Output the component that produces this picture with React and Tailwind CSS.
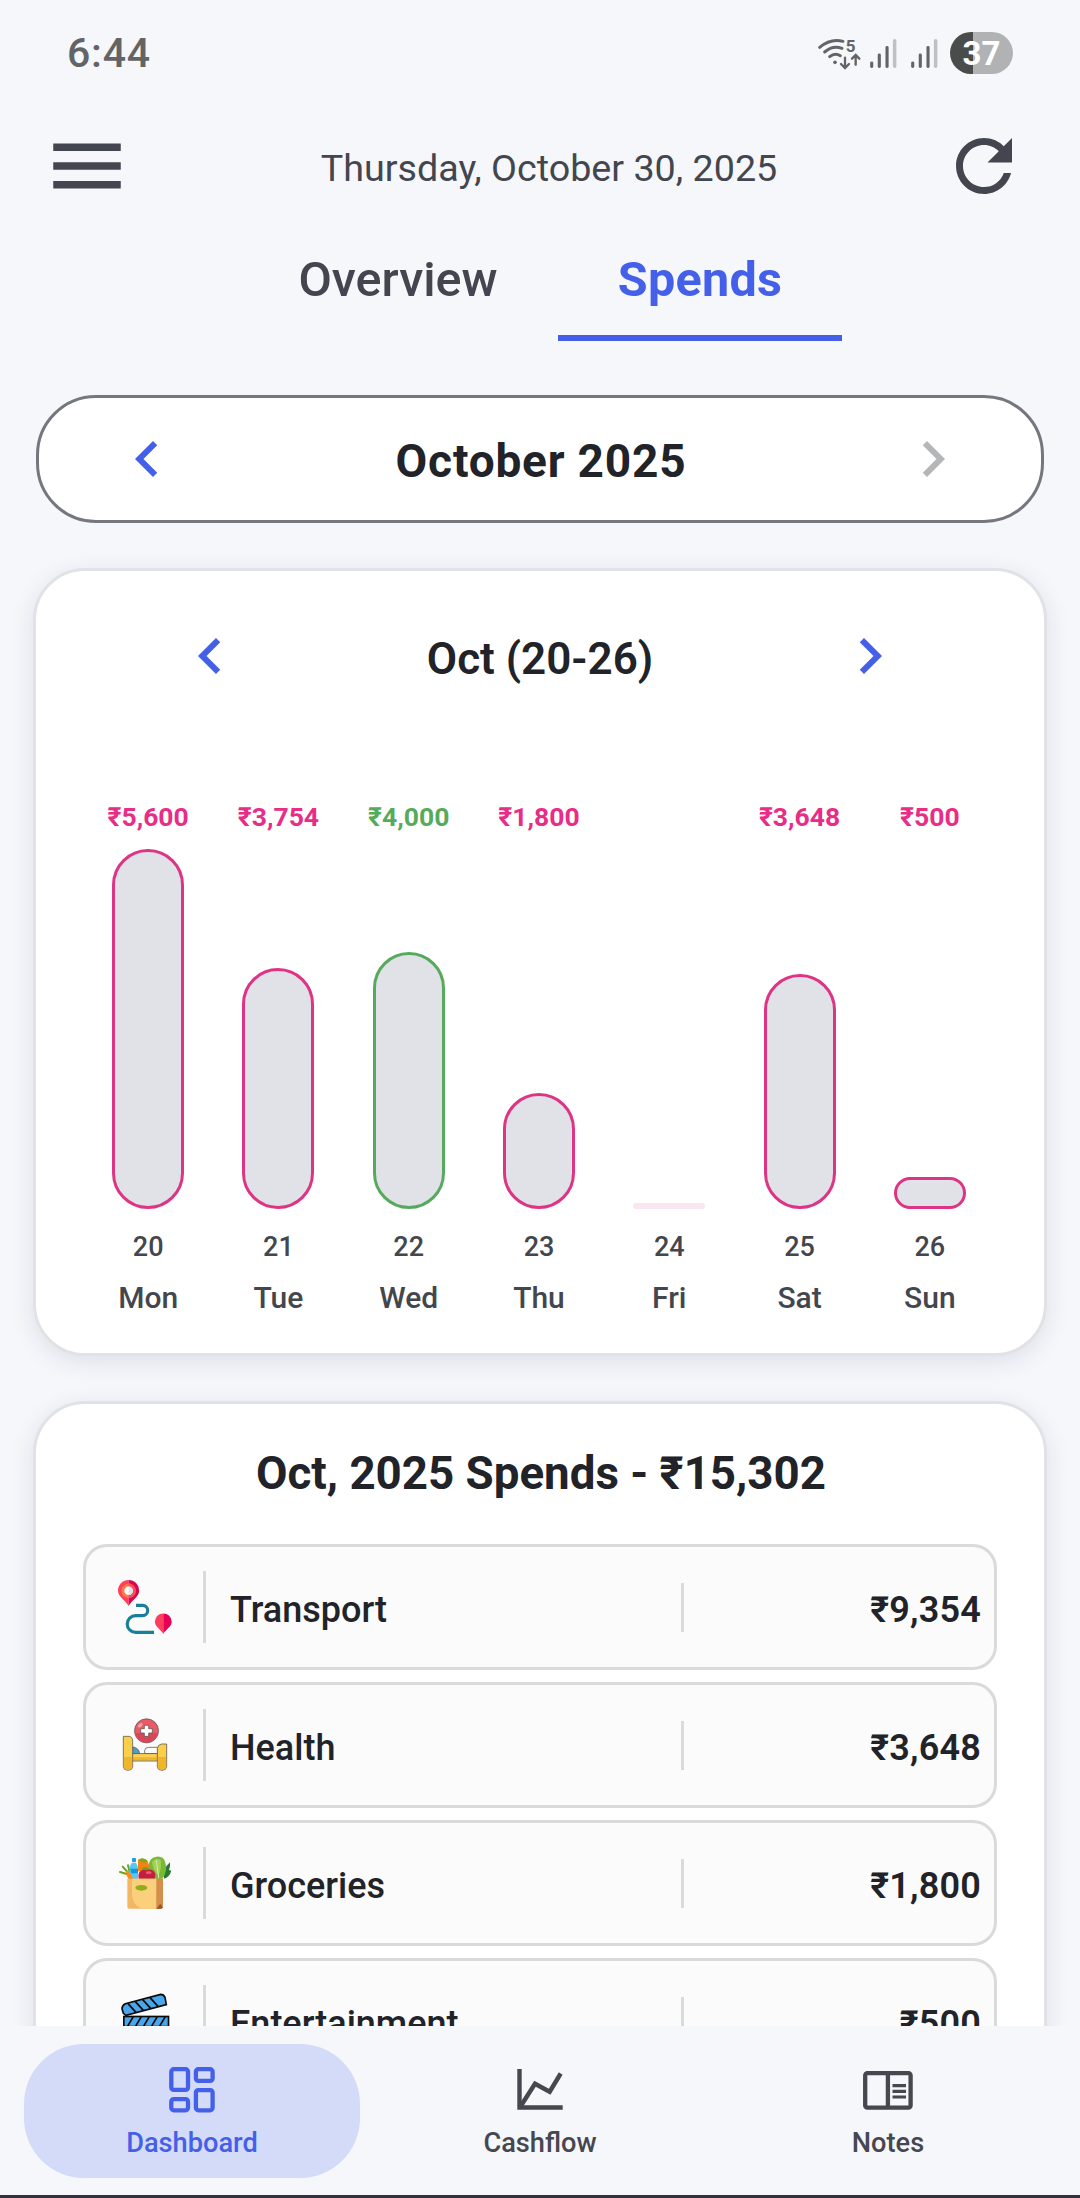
import { MdMenu, MdRefresh, MdChevronLeft, MdChevronRight } from "react-icons/md";

const week = [
  { day: "Mon", date: 20, label: "₹5,600", height: 360, tone: "pink" },
  { day: "Tue", date: 21, label: "₹3,754", height: 241, tone: "pink" },
  { day: "Wed", date: 22, label: "₹4,000", height: 257, tone: "green" },
  { day: "Thu", date: 23, label: "₹1,800", height: 116, tone: "pink" },
  { day: "Fri", date: 24, label: "", height: 0, tone: "none" },
  { day: "Sat", date: 25, label: "₹3,648", height: 235, tone: "pink" },
  { day: "Sun", date: 26, label: "₹500", height: 32, tone: "pink" },
];

const tones = {
  pink: { text: "text-[#e92c86]", bar: "border-[#dd3486]" },
  green: { text: "text-[#56ab5b]", bar: "border-[#56a95d]" },
  none: { text: "", bar: "" },
};

const categories = [
  { name: "Transport", amount: "₹9,354", Icon: TransportIcon },
  { name: "Health", amount: "₹3,648", Icon: HealthIcon },
  { name: "Groceries", amount: "₹1,800", Icon: GroceriesIcon },
  { name: "Entertainment", amount: "₹500", Icon: ClapperIcon },
];

function WifiIcon() {
  return (
    <svg viewBox="48 45 138 108" className="h-9 w-[46px]" fill="none" stroke="#636465" strokeWidth="9" strokeLinecap="round">
      <path d="M59 82 Q92 54 129 64" />
      <path d="M74 96 Q98 75 126 85" />
      <path d="M89 110 Q105 97 121 107" />
      <circle cx="105" cy="127" r="5.5" fill="#636465" stroke="none" />
      <text x="137" y="95" fontSize="51" fontWeight="700" fontFamily="Roboto, sans-serif" fill="#636465" stroke="none">5</text>
      <path d="M135 113 V143 M123 132 L135 144 L147 132" strokeWidth="7" />
      <path d="M167 134 V106 M156 116 L167 105 L178 116" strokeWidth="7" />
    </svg>
  );
}

function SignalIcon() {
  return (
    <svg viewBox="208 50 84 94" className="h-[31px] w-7">
      <rect x="211" y="121" width="9.5" height="20" rx="4.5" fill="#636465" />
      <rect x="234" y="97" width="9.5" height="44" rx="4.5" fill="#636465" />
      <rect x="257.5" y="74" width="9.5" height="67" rx="4.5" fill="#636465" />
      <rect x="280" y="53" width="10.5" height="88" rx="5" fill="#bfc0c3" />
    </svg>
  );
}

function TransportIcon() {
  return (
    <svg viewBox="0 0 54 54" className="size-[54px]">
      <path d="M18 25.4 H24.6 a5 5 0 0 1 0 10.2 H17.6 a8.3 8.3 0 0 0 0 16.8 H36" fill="none" stroke="#197e99" strokeWidth="3.1" />
      <path d="M10.6 0 A10.6 10.6 0 0 0 0 10.6 C0 17 7 20 10.6 26 Z" fill="#ff4155" />
      <path d="M10.6 0 A10.6 10.6 0 0 1 21.2 10.6 C21.2 17 14.2 20 10.6 26 Z" fill="#d3084f" />
      <circle cx="10.6" cy="10.8" r="7.2" fill="#ff7a4a" />
      <path d="M10.6 3.6 a7.2 7.2 0 0 1 0 14.4 Z" fill="#fb4a59" />
      <circle cx="10.6" cy="10.8" r="4.3" fill="#fff" />
      <path d="M10.6 6.5 a4.3 4.3 0 0 1 0 8.6 Z" fill="#dfe3ee" />
      <path d="M45.3 33.4 A8.4 8.4 0 0 0 36.9 41.8 C36.9 47 43 49.5 45.3 54 Z" fill="#ff3d5c" />
      <path d="M45.3 33.4 A8.4 8.4 0 0 1 53.7 41.8 C53.7 47 47.6 49.5 45.3 54 Z" fill="#e60058" />
    </svg>
  );
}

function HealthIcon() {
  return (
    <svg viewBox="174 174 162 162" className="size-[54px]" stroke="#5d5a55" strokeWidth="2.4">
      <path d="M218 261 C230 262 238 270 239 281 H218 Z" fill="#4a9fd0" />
      <path d="M254 281 V272 Q255 262 266 262 H293 V281 Z" fill="#fbfbfb" />
      <rect x="216" y="281" width="78" height="22" fill="#fbd050" />
      <rect x="217" y="292" width="76" height="8" fill="#efb52b" stroke="none" />
      <path d="M190 229 H207 Q218 230 218 244 V322 Q216 331 204 331 Q191 331 190 320 Z" fill="#fbcf4c" />
      <path d="M191.500 291 H216.500 V321 Q214 330 204 330 Q192 330 191.500 319 Z" fill="#efb52b" stroke="none" />
      <path d="M320 252 H304 Q293 254 292 266 V322 Q294 331 306 331 Q319 331 320 320 Z" fill="#fbcf4c" />
      <path d="M318.500 291 H293.500 V321 Q296 330 306 330 Q318 330 318.500 319 Z" fill="#efb52b" stroke="none" />
      <circle cx="259.500" cy="212.500" r="36" fill="#ec5a68" />
      <path d="M225 219 H294 A35 35 0 0 1 225 219 Z" fill="#d9465a" stroke="none" />
      <ellipse cx="241" cy="196" rx="8" ry="5" transform="rotate(-40 241 196)" fill="#f9a3aa" stroke="none" />
      <path d="M253 196 H266 V206 H277 V219 H266 V229 H253 V219 H242 V206 H253 Z" fill="#fff" />
    </svg>
  );
}

function GroceriesIcon() {
  return (
    <svg viewBox="174 588 162 162" className="size-[54px]">
      <path d="M208 644 L180 636 M208 642 L188 620 M210 640 L204 616" stroke="#6ba51d" strokeWidth="6" strokeLinecap="round" fill="none" />
      <path d="M198 634 Q212 630 222 642 L232 658 H206 Q197 646 198 634 Z" fill="#fb8c1c" />
      <rect x="216" y="594" width="12" height="12" rx="2" fill="#1e9ee6" />
      <path d="M216 608 H228 Q235 618 234 628 V658 H220 L209 636 V624 Q210 614 216 608 Z" fill="#55c8f5" />
      <path d="M211 626 H234 V640 H214 Z" fill="#1496e0" />
      <path d="M234 600 Q246 592 262 602 L274 634 H234 Z" fill="#f78212" />
      <path d="M234 600 Q250 588 264 604 Q250 612 240 602 Z" fill="#7cab1f" />
      <path d="M312 656 Q306 628 330 607 Q332 620 327 630 L334 632 Q328 652 312 656 Z" fill="#2b7a33" />
      <path d="M266 616 Q268 592 290 590 Q312 588 316 608 Q324 634 306 658 H284 Q268 640 266 616 Z" fill="#79ba35" />
      <path d="M276 606 Q288 592 302 600 Q306 620 296 648 Q280 632 276 606 Z" fill="#a3d15a" />
      <path d="M289 600 L296 654" stroke="#d8ecae" strokeWidth="3" />
      <path d="M236 658 Q230 630 256 628 Q284 626 286 644 L284 658 Z" fill="#c41f3f" />
      <path d="M244 628 Q256 616 270 628 Q258 634 244 628 Z" fill="#6e9a1f" />
      <ellipse cx="266" cy="638" rx="9" ry="4" fill="#ef5c72" />
      <path d="M202 656 H309 V740 Q309 746 303 746 H208 Q202 746 202 740 Z" fill="#f3b763" />
      <path d="M216 656 H289 V746 H250 Q216 738 216 698 Z" fill="#fad07c" />
      <path d="M289 656 H309 V740 Q309 746 303 746 H289 Z" fill="#d48f4c" />
      <path d="M289 746 L301 731 L308 742 Q306 746 302 746 Z" fill="#94552b" />
      <ellipse cx="244" cy="683.500" rx="18" ry="8.500" fill="#93ac17" />
    </svg>
  );
}

function ClapperIcon() {
  return (
    <svg viewBox="174 1002 162 162" className="size-[54px] overflow-visible" stroke="#0a0a0a" strokeWidth="5">
      <path d="M198 1066 L190 1060 L186 1046 Q186 1036 196 1031 L302 1003 Q311 1003 315 1012 L319 1034 Z" fill="#4aa5ea" />
      <path d="M204 1031 L228 1057 M226 1025 L250 1051 M248 1019 L272 1045 M270 1013 L294 1039" fill="none" />
      <rect x="191.500" y="1069.500" width="134" height="90" fill="#4aa5ea" />
      <path d="M191 1100 H326 M202 1100 L220 1070 M226 1100 L244 1070 M250 1100 L268 1070 M274 1100 L292 1070 M298 1100 L316 1070" fill="none" />
    </svg>
  );
}

function DashboardIcon() {
  return (
    <svg viewBox="0 0 60 60" className="size-[60px]" fill="none" stroke="currentColor" strokeWidth="4.300">
      <rect x="9.300" y="9.200" width="16.700" height="20.700" rx="2.500" />
      <rect x="33.900" y="9.200" width="16.700" height="11.700" rx="2.500" />
      <rect x="9.300" y="39.100" width="16.700" height="11.200" rx="2.500" />
      <rect x="33.900" y="30.100" width="16.700" height="20.200" rx="2.500" />
    </svg>
  );
}

function CashflowIcon() {
  return (
    <svg viewBox="0 0 60 60" className="size-[60px]" fill="none" stroke="currentColor" strokeWidth="4.400">
      <path d="M9.500 9 V47.500 H52.700" />
      <path d="M10.500 46.500 L25 23.700 L39.700 31.700 L50.700 13.500" />
    </svg>
  );
}

function NotesIcon() {
  return (
    <svg viewBox="0 0 60 60" className="size-[60px]" fill="none" stroke="currentColor" strokeWidth="4.300">
      <rect x="7.200" y="13.200" width="45.400" height="34.500" rx="2.200" />
      <path d="M29.900 13 V48" />
      <path d="M34.500 25.700 H48 M34.500 31.300 H48 M34.500 37 H48" strokeWidth="3.200" />
    </svg>
  );
}

function DayColumn({ day, date, label, height, tone }) {
  return (
    <div className="flex flex-1 flex-col items-center">
      <div className={`h-8 text-[26.5px] leading-[33px] font-bold ${tones[tone].text}`}>{label}</div>
      <div className="mt-[17px] flex h-[360px] items-end">
        {height > 0 ? (
          <div className={`w-[72px] rounded-[36px] border-[3px] bg-[#e1e2e8] ${tones[tone].bar}`} style={{ height }} />
        ) : (
          <div className="h-1.5 w-[72px] rounded-full bg-[#f9e6f1]" />
        )}
      </div>
      <div className="mt-5 h-9 text-[27px] leading-9 font-medium text-[#44464e]">{date}</div>
      <div className="mt-[13px] h-10 text-[30px] leading-10 font-medium text-[#44464e]">{day}</div>
    </div>
  );
}

function CategoryRow({ name, amount, Icon }) {
  return (
    <div className="flex h-[126px] shrink-0 items-center rounded-3xl border-[3px] border-[#d9dadc] bg-[#fbfbfb] pr-[13px] pl-8">
      <Icon />
      <div className="ml-[31px] h-[72px] w-[3px] bg-[#d9dade]" />
      <div className="w-[475px] pt-1.5 pl-6 text-[36px] leading-none font-medium">{name}</div>
      <div className="h-[49px] w-[3px] bg-[#d9dade]" />
      <div className="flex-1 pt-1.5 text-right text-[36px] leading-none font-semibold tracking-[0.2px]">{amount}</div>
    </div>
  );
}

function NavItem({ label, Icon, active }) {
  return (
    <div
      className={`flex h-[134px] flex-1 flex-col items-center rounded-[60px] pt-4 ${
        active ? "bg-[#d4dbf8] text-[#4460e8]" : "text-[#46474f]"
      }`}
    >
      <Icon />
      <div className="mt-[5px] text-[27.2px] leading-9 font-medium">{label}</div>
    </div>
  );
}

export default function App() {
  return (
    <div className="flex h-[2198px] w-[1080px] flex-col overflow-hidden bg-[#f5f7fb] font-['Roboto',sans-serif] text-[#212329]">
      <div className="flex h-[106px] shrink-0 items-center px-[67px]">
        <div className="pt-px text-[41px] leading-none font-medium tracking-[0.8px] text-[#636465]">6:44</div>
        <div className="ml-auto flex items-center">
          <WifiIcon />
          <div className="ml-[7px] flex gap-[13px]">
            <SignalIcon />
            <SignalIcon />
          </div>
          <div className="ml-3 flex h-[42px] w-[63px] items-center justify-center rounded-full bg-[linear-gradient(90deg,#4a4c4b_36.5%,#b1b2b4_36.5%)] text-[33px] leading-none font-bold text-white">
            37
          </div>
        </div>
      </div>

      <div className="flex h-[120px] shrink-0 items-center pr-[54px] pl-[42px] text-[#44464f]">
        <MdMenu className="size-[90px]" />
        <div className="flex-1 pt-1.5 pl-6 text-center text-[37.7px] leading-none">Thursday, October 30, 2025</div>
        <MdRefresh className="size-[84px]" />
      </div>

      <div className="flex h-[115px] shrink-0 pl-[238px] text-[48.5px]">
        <div className="flex w-[320px] items-center justify-center border-b-[6px] border-transparent font-medium text-[#44464f]">
          Overview
        </div>
        <div className="flex w-[284px] items-center justify-center border-b-[6px] border-[#4460e8] font-bold tracking-[0.3px] text-[#4460e8]">
          Spends
        </div>
      </div>

      <div className="flex min-h-0 flex-1 flex-col overflow-hidden">
        <div className="mx-9 mt-[54px] flex h-32 shrink-0 items-center justify-between rounded-[60px] border-[3px] border-[#75777f] bg-white px-[72px]">
          <MdChevronLeft className="size-[72px] text-[#4460e8]" />
          <div className="pt-1 pl-0.5 text-[46px] leading-none font-bold tracking-[0.8px]">October 2025</div>
          <MdChevronRight className="size-[72px] text-[#b5b6b8]" />
        </div>

        <div className="mx-[33px] mt-[45px] h-[788px] shrink-0 rounded-[52px] border-[3px] border-[#e1e2e6] bg-white pt-[49px] shadow-[0_6px_24px_rgba(30,35,60,0.11)]">
          <div className="flex items-center justify-between px-[138px]">
            <MdChevronLeft className="size-[72px] text-[#4460e8]" />
            <div className="pt-1.5 text-[44px] leading-none font-semibold">Oct (20-26)</div>
            <MdChevronRight className="size-[72px] text-[#4460e8]" />
          </div>
          <div className="mr-[49px] ml-[47px] mt-[108px] flex">
            {week.map((d) => (
              <DayColumn key={d.day} {...d} />
            ))}
          </div>
        </div>

        <div className="mx-[33px] mt-[45px] shrink-0 rounded-[52px] border-[3px] border-[#e1e2e8] bg-white pt-[39px] pb-12 shadow-[0_6px_24px_rgba(30,35,60,0.11)]">
          <div className="h-[60px] pl-0.5 text-center text-[45.7px] leading-[62px] font-bold">Oct, 2025 Spends - ₹15,302</div>
          <div className="mx-[47px] mt-[41px] flex flex-col gap-3">
            {categories.map((c) => (
              <CategoryRow key={c.name} {...c} />
            ))}
          </div>
        </div>
      </div>

      <div className="flex h-[172px] shrink-0 gap-3 border-b-[3px] border-[#33323c] px-6 pt-[18px]">
        <NavItem label="Dashboard" Icon={DashboardIcon} active />
        <NavItem label="Cashflow" Icon={CashflowIcon} />
        <NavItem label="Notes" Icon={NotesIcon} />
      </div>
    </div>
  );
}
